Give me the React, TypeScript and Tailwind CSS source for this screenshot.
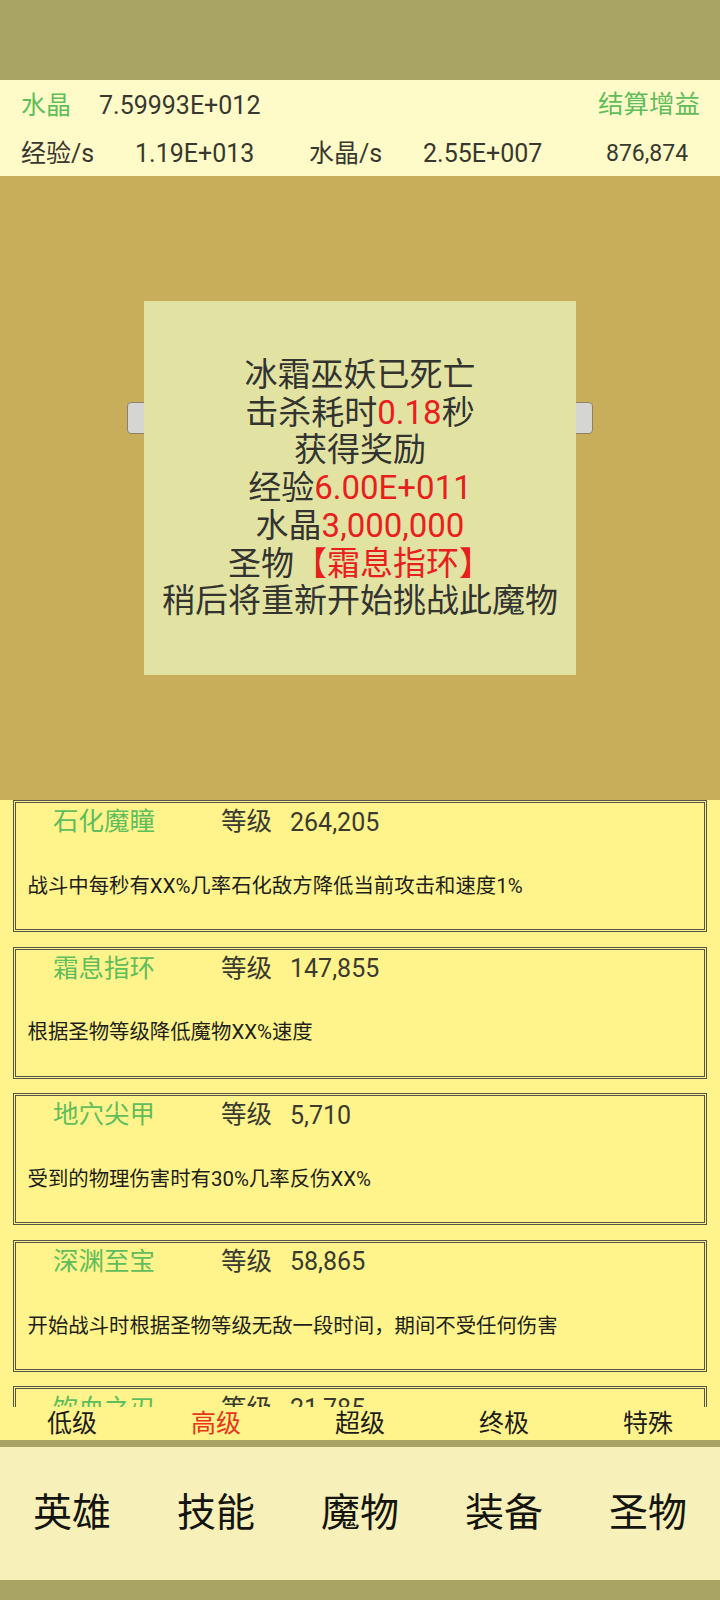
import React from "react";

const FONT = { fontFamily: "Roboto, 'Noto Sans CJK SC', 'Noto Sans', sans-serif" };

const relics = [
  { name: "石化魔瞳", level: "264,205", desc: "战斗中每秒有XX%几率石化敌方降低当前攻击和速度1%" },
  { name: "霜息指环", level: "147,855", desc: "根据圣物等级降低魔物XX%速度" },
  { name: "地穴尖甲", level: "5,710", desc: "受到的物理伤害时有30%几率反伤XX%" },
  { name: "深渊至宝", level: "58,865", desc: "开始战斗时根据圣物等级无敌一段时间，期间不受任何伤害" },
  { name: "饮血之刃", level: "21,785", desc: "攻击时有XX%几率吸取敌方生命" },
];

function Card({ name, level, desc }: { name: string; level: string; desc: string }) {
  return (
    <div className="h-[132px] shrink-0 border-[3px] border-double border-[#55554a] flex flex-col">
      <div className="h-[38px] flex items-center pl-[37px]">
        <span className="w-[168px] text-[25.5px] text-[#5fbd5c] leading-none">{name}</span>
        <span className="text-[25.5px] text-[#3a3a30] leading-none">等级</span>
        <span className="ml-[18px] text-[25px] text-[#3a3a30] leading-none">{level}</span>
      </div>
      <div className="mt-[31px] pl-[11.5px] h-[28px] flex items-center text-[20.4px] text-[#1e1e1a] leading-none whitespace-nowrap">
        {desc}
      </div>
    </div>
  );
}

export default function App() {
  const tabs = ["低级", "高级", "超级", "终极", "特殊"];
  const nav = ["英雄", "技能", "魔物", "装备", "圣物"];
  return (
    <div className="w-[720px] h-[1600px] flex flex-col overflow-hidden" style={FONT}>
      <div className="h-[80px] shrink-0 bg-[#a9a463]" />
      <div className="h-[96px] shrink-0 bg-[#fffbc9] flex flex-col text-[#38382e]">
        <div className="h-[50px] flex items-center pl-[21px] pr-[20px]">
          <span className="text-[25px] text-[#5fbd5c] leading-none">水晶</span>
          <span className="ml-[28px] text-[25px] leading-none">7.59993E+012</span>
          <span className="ml-auto text-[25.5px] text-[#5fbd5c] leading-none">结算增益</span>
        </div>
        <div className="h-[46px] flex items-center pl-[21px] text-[25px] leading-none">
          <span className="w-[114px]">经验/s</span>
          <span className="w-[174px]">1.19E+013</span>
          <span className="w-[114px]">水晶/s</span>
          <span className="w-[183px]">2.55E+007</span>
          <span className="text-[23px]">876,874</span>
        </div>
      </div>
      <div className="h-[624px] shrink-0 bg-[#c8ad5a] relative">
        <div className="flex justify-between px-[127px] pt-[226px]">
          <div className="w-[100px] h-[32px] rounded-[4px] bg-[#d5d5d3] border border-[#8d8265]" />
          <div className="w-[100px] h-[32px] rounded-[4px] bg-[#d5d5d3] border border-[#8d8265]" />
        </div>
        <div className="absolute left-[144px] top-[125px] w-[432px] h-[374px] bg-[#e2e3a3] flex flex-col items-center justify-center text-[33px] leading-[37.8px] text-[#333330] text-center">
          <div>冰霜巫妖已死亡</div>
          <div>
            击杀耗时<span className="text-[#e8201c]">0.18</span>秒
          </div>
          <div>获得奖励</div>
          <div>
            经验<span className="text-[#e8201c]">6.00E+011</span>
          </div>
          <div>
            水晶<span className="text-[#e8201c]">3,000,000</span>
          </div>
          <div>
            圣物<span className="text-[#e8201c]">【霜息指环】</span>
          </div>
          <div>稍后将重新开始挑战此魔物</div>
        </div>
      </div>
      <div className="h-[607px] shrink-0 bg-[#fff48c] overflow-hidden px-[13px] flex flex-col gap-[14.6px]">
        {relics.map((r) => (
          <Card key={r.name} {...r} />
        ))}
      </div>
      <div className="h-[33px] shrink-0 bg-[#fff48c] grid grid-cols-5 items-center text-[25px] leading-none text-[#1c1c18]">
        {tabs.map((t, i) => (
          <div key={t} className={"text-center " + (i === 1 ? "text-[#e8361c]" : "")}>
            {t}
          </div>
        ))}
      </div>
      <div className="h-[7px] shrink-0 bg-[#a9a463]" />
      <div className="h-[133px] shrink-0 bg-[#f7f0b9] grid grid-cols-5 items-center text-[39px] leading-none text-[#141410]">
        {nav.map((t) => (
          <div key={t} className="text-center">
            {t}
          </div>
        ))}
      </div>
      <div className="flex-1 bg-[#a9a463]" />
    </div>
  );
}
